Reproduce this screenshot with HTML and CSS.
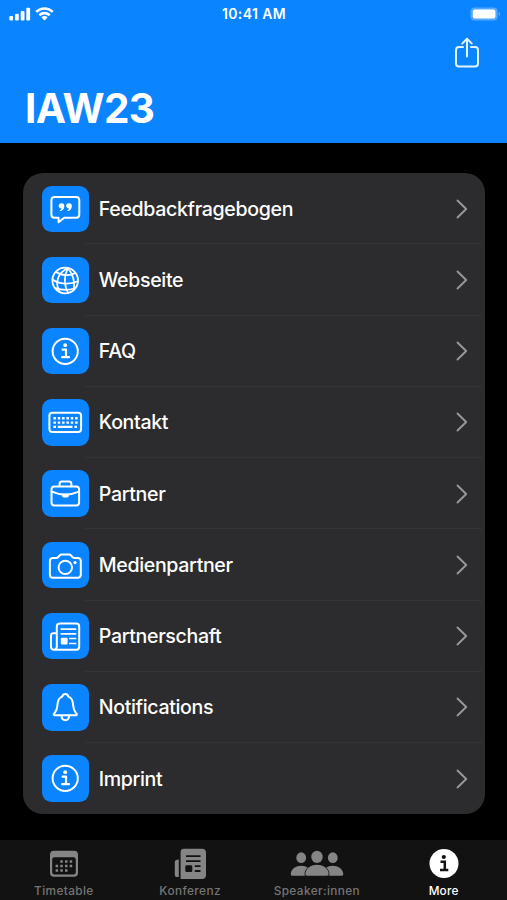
FILE: index.html
```html
<!DOCTYPE html>
<html lang="de">
<head>
  <meta charset="UTF-8" />
  <meta name="viewport" content="width=device-width, initial-scale=1.0" />
  <title>IAW23</title>
  <link rel="stylesheet" href="styles.css">
</head>
<body>
  <svg class="hidden">
    <symbol id="chevron" viewBox="0 0 12 20"><path d="M1.5 1.5 L10.2 10 L1.5 18.5" /></symbol>
    <symbol id="info" viewBox="0 0 46.5 46.5">
      <circle cx="23.2" cy="23.3" r="12.6" />
      <circle class="fill" cx="23.2" cy="17.2" r="1.9" />
      <path class="stem" d="M20.6 21.7 H24 V29 M20.1 29.2 H27" />
    </symbol>
  </svg>

  <header>
    <div class="status-bar">
      <div class="signal">
        <svg width="22" height="14" viewBox="0 0 22 14">
          <rect x="0.3" y="8.9" width="3.8" height="4.7" rx="1" />
          <rect x="6" y="6.8" width="3.8" height="6.8" rx="1" />
          <rect x="11.7" y="4" width="3.8" height="9.6" rx="1" />
          <rect x="17.3" y="0.7" width="3.8" height="12.9" rx="1" />
        </svg>
        <svg class="wifi" width="19" height="14" viewBox="0 0 19 14">
          <path d="M1.2 4.9 C6 .3 13 .3 17.8 4.9 M4.3 8.2 C7.3 5.4 11.7 5.4 14.7 8.2" />
          <path class="dot" d="M6.3 10.3 Q9.5 7.9 12.7 10.3 L9.5 13.5 Z" />
        </svg>
      </div>
      <span class="time">10:41 AM</span>
      <svg class="battery" width="31" height="14" viewBox="0 0 31 14">
        <rect class="case" x="0.5" y="0.5" width="27.1" height="13" rx="4" />
        <rect x="2.8" y="2.5" width="22.6" height="9" rx="2.2" />
        <path class="cap" d="M28.8 4.8 Q31.2 7 28.8 9.2 Z" />
      </svg>
    </div>
    <div class="toolbar">
      <svg class="share" width="26" height="32" viewBox="0 0 26 32">
        <path d="M9 10 H5 Q2 10 2 13 V26.6 Q2 29.6 5 29.6 H21 Q24 29.6 24 26.6 V13 Q24 10 21 10 H17" />
        <path d="M13 19.4 V2 M8.2 6.6 L13 1.8 L17.8 6.6" />
      </svg>
    </div>
    <h1>IAW23</h1>
  </header>

  <main>
    <ul class="menu">
      <li>
        <svg class="tile" viewBox="0 0 46.5 46.5">
          <path d="M12.7 11 H34 Q37.3 11 37.3 14.3 V28.5 Q37.3 31.8 34 31.8 H22.2 L16.6 36.3 V31.8 H12.7 Q9.4 31.8 9.4 28.5 V14.3 Q9.4 11 12.7 11 Z" />
          <path class="fill" d="M19.4 17.2 a2.8 2.8 0 0 1 2.9 3 c0 2.5-1.6 4.4-4 5 l-.5-1 c1.2-.4 1.9-1.1 2.1-1.9 a2.6 2.6 0 1 1-.5-5.1 Z M26.9 17.2 a2.8 2.8 0 0 1 2.9 3 c0 2.5-1.6 4.4-4 5 l-.5-1 c1.2-.4 1.9-1.1 2.1-1.9 a2.6 2.6 0 1 1-.5-5.1 Z" />
        </svg>
        <span>Feedbackfragebogen</span>
        <svg class="chevron"><use href="#chevron" /></svg>
      </li>
      <li>
        <svg class="tile globe" viewBox="0 0 46.5 46.5">
          <circle cx="23.2" cy="23.5" r="12.8" />
          <path d="M25.8 11 C22 19 22 28 26 35.9 M25.8 11 C15.5 16 12.7 26 17.5 34.6 M25.8 11 C31 17 33 25 31.8 32.8" />
          <path d="M14 14.7 C19 18.8 28 19.3 33.2 16 M10.5 22.5 C17 27.3 28 28 35.8 24.3 M13.2 31 C19 33 27 33.2 32.2 31.5" />
        </svg>
        <span>Webseite</span>
        <svg class="chevron"><use href="#chevron" /></svg>
      </li>
      <li>
        <svg class="tile"><use href="#info" /></svg>
        <span>FAQ</span>
        <svg class="chevron"><use href="#chevron" /></svg>
      </li>
      <li>
        <svg class="tile" viewBox="0 0 46.5 46.5">
          <rect x="7.4" y="13.7" width="31.7" height="19.4" rx="3" />
          <path class="keys" d="M11.4 19.3 H35.6 M11.4 23.6 H35.6" />
          <path class="space" d="M11.4 27.9 H14 M15.8 27.9 H30.4 M32.4 27.9 H35" />
        </svg>
        <span>Kontakt</span>
        <svg class="chevron"><use href="#chevron" /></svg>
      </li>
      <li>
        <svg class="tile" viewBox="0 0 46.5 46.5">
          <rect x="9.5" y="16.4" width="27.6" height="19.2" rx="3" />
          <path d="M17.6 16.3 V14 Q17.6 11.6 20 11.6 H27 Q29.4 11.6 29.4 14 V16.3 M9.7 21.7 Q23.3 27.6 36.9 21.7" />
          <rect class="fill" x="20" y="23.4" width="6.8" height="4" rx="1.6" />
        </svg>
        <span>Partner</span>
        <svg class="chevron"><use href="#chevron" /></svg>
      </li>
      <li>
        <svg class="tile" viewBox="0 0 46.5 46.5">
          <path d="M11 15.9 H14.4 Q15.8 15.9 16.7 14.7 L17.7 13.4 Q18.5 12.5 19.7 12.5 H27 Q28.2 12.5 29 13.4 L30 14.7 Q30.9 15.9 32.3 15.9 H35.7 Q38.8 15.9 38.8 19 V32.7 Q38.8 35.8 35.7 35.8 H11 Q7.9 35.8 7.9 32.7 V19 Q7.9 15.9 11 15.9 Z" />
          <circle cx="23.3" cy="25.4" r="6.7" />
          <circle class="fill" cx="33" cy="20.6" r="1.6" />
        </svg>
        <span>Medienpartner</span>
        <svg class="chevron"><use href="#chevron" /></svg>
      </li>
      <li>
        <svg class="tile" viewBox="0 0 46.5 46.5">
          <path d="M14.8 33.6 V13.4 Q14.8 10.4 17.8 10.4 H34.2 Q37.2 10.4 37.2 13.4 V33.8 Q37.2 36.8 34.2 36.8 H12 Q9 36.8 9 33.8 V22.7 Q9 20.3 11.4 20.3 H14.8 V33.6 Q14.8 36.8 12 36.8" />
          <path class="thin" d="M19.2 16.1 H33.6 M19.2 20.8 H33.6 M27.8 25.5 H33.6 M27.8 30.5 H33.6" />
          <rect class="fill" x="18.8" y="24.8" width="6.8" height="6.6" rx="1" />
        </svg>
        <span>Partnerschaft</span>
        <svg class="chevron"><use href="#chevron" /></svg>
      </li>
      <li>
        <svg class="tile" viewBox="0 0 46.5 46.5">
          <path d="M12.3 31.2 Q11.3 31.2 12 29.8 C13.7 27.6 15.1 26.7 15.4 21.5 C15.6 16.2 17.1 13.6 20.2 12.6 C21.2 9.2 25.4 9.2 26.4 12.6 C29.5 13.6 31 16.2 31.2 21.5 C31.5 26.7 32.9 27.6 34.6 29.8 Q35.3 31.2 34.3 31.2 Z M19.5 31.8 C19.7 37.7 26.9 37.7 27.1 31.8" />
        </svg>
        <span>Notifications</span>
        <svg class="chevron"><use href="#chevron" /></svg>
      </li>
      <li>
        <svg class="tile"><use href="#info" /></svg>
        <span>Imprint</span>
        <svg class="chevron"><use href="#chevron" /></svg>
      </li>
    </ul>
  </main>

  <nav>
    <a>
      <svg width="30" height="32" viewBox="0 0 30 32">
        <path fill-rule="evenodd" d="M5 2.7 H25 Q29 2.7 29 6.7 V24.7 Q29 28.7 25 28.7 H5 Q1 28.7 1 24.7 V6.7 Q1 2.7 5 2.7 Z M5.5 9.3 Q3.2 9.3 3.2 11.5 V24.3 Q3.2 26.5 5.5 26.5 H24.5 Q26.8 26.5 26.8 24.3 V11.5 Q26.8 9.3 24.5 9.3 Z" />
        <path class="days" d="M11.3 13.4 H24 M6.6 17.9 H24 M6.6 22.4 H19.4" />
      </svg>
      Timetable
    </a>
    <a>
      <svg width="32" height="32" viewBox="0 0 32 32">
        <path d="M10 0.7 H28 Q32 0.7 32 4.7 V27 Q32 31 28 31 H6.6 V4.1 Q6.6 0.7 10 0.7 Z M4.8 11.5 V29 H3.4 Q0.8 29 0.8 26.4 V14 Q0.8 11.5 4.8 11.5 Z" />
        <path class="print" d="M12 8.2 H26.5 M12 13.2 H26.5 M20.8 18.1 H26.5 M20.8 23 H26.5" />
        <rect class="photo" x="11.3" y="17.2" width="7" height="6.7" rx="1.2" />
      </svg>
      Konferenz
    </a>
    <a>
      <svg width="54" height="32" viewBox="0 0 54 32">
        <ellipse cx="11.2" cy="9.7" rx="4.9" ry="5.4" />
        <ellipse cx="42.8" cy="9.7" rx="4.9" ry="5.4" />
        <path d="M2.2 27.7 Q.6 27.7 .7 25.9 C1.7 14.9 20.7 14.9 21.7 25.9 V27.7 Z M51.8 27.7 Q53.4 27.7 53.3 25.9 C52.3 14.9 33.3 14.9 32.3 25.9 V27.7 Z" />
        <path class="front" d="M17 27.7 Q15.3 27.7 15.3 25.7 C16.5 13.9 37.5 13.9 38.7 25.7 Q38.7 27.7 37 27.7 Z" />
        <ellipse cx="27" cy="8.9" rx="5.7" ry="6.2" />
      </svg>
      Speaker:innen
    </a>
    <a class="active">
      <svg width="32" height="32" viewBox="0 0 32 32">
        <circle cx="16" cy="15.6" r="14.5" />
        <circle class="dark" cx="15.8" cy="9" r="2.1" />
        <path class="mark" d="M12.5 13.8 H16.8 V21.8 M12 22.1 H20.3" />
      </svg>
      More
    </a>
  </nav>
</body>
</html>
```
FILE: styles.css
```css
* {
  box-sizing: border-box;
  margin: 0;
  padding: 0;
}

body {
  display: flex;
  flex-direction: column;
  height: 100vh;
  overflow: hidden;
  background: #000;
  color: #fff;
  font-family: Inter, "Liberation Sans", sans-serif;
}

.hidden {
  display: none;
}

/* Header */
header {
  height: 142.5px;
  background: #0a84ff;
}

.status-bar {
  display: grid;
  grid-template-columns: 1fr auto 1fr;
  align-items: center;
  height: 27px;
  padding: 0 6px 0 9px;
}

.status-bar svg {
  display: block;
  fill: #fff;
}

.signal {
  display: flex;
  gap: 4px;
}

.status-bar .wifi {
  fill: none;
  stroke: #fff;
  stroke-width: 2.6;
}

.status-bar .dot {
  fill: #fff;
  stroke: none;
}

.time {
  margin-right: 2px;
  font-size: 14px;
  font-weight: 600;
  letter-spacing: 0.4px;
}

.battery {
  justify-self: end;
}

.status-bar .case {
  fill: #55a9ff;
}

.status-bar .cap {
  fill: #6cb5ff;
}

.toolbar {
  display: flex;
  justify-content: flex-end;
  height: 56px;
  padding: 9.5px 27px 0 0;
}

.share {
  fill: none;
  stroke: #e2f4ff;
  stroke-width: 2;
  stroke-linecap: round;
  stroke-linejoin: round;
}

h1 {
  padding-left: 25px;
  font-size: 40.5px;
  font-weight: 700;
  line-height: 52px;
  letter-spacing: -0.6px;
}

/* List */
main {
  flex: 1;
  padding: 30.7px 22.5px 0 23px;
}

.menu {
  border-radius: 20px;
  background: #2c2c2e;
  list-style: none;
}

.menu li {
  display: flex;
  align-items: center;
  height: 71.22px;
  padding: 0 17px 0 19.3px;
  background: linear-gradient(#343436, #343436) 61px 100% / 398px 1px no-repeat;
}

.menu li:last-child {
  background: none;
}

.menu span {
  flex: 1;
  padding-left: 10px;
  font-size: 19.6px;
  font-weight: 500;
  letter-spacing: -0.36px;
}

.tile {
  width: 46.5px;
  height: 46.5px;
  border-radius: 9.5px;
  background: #0a84ff;
  fill: none;
  stroke: #fff;
  stroke-width: 2;
  stroke-linecap: round;
  stroke-linejoin: round;
}

.fill {
  fill: #fff;
  stroke: none;
}

.stem {
  stroke-width: 2.2;
}

.globe {
  stroke-width: 1.8;
}

.keys {
  stroke-width: 2.4;
  stroke-linecap: butt;
  stroke-dasharray: 2.5 1.84;
}

.space {
  stroke-width: 2.3;
  stroke-linecap: butt;
}

.thin {
  stroke-width: 1.7;
}

.chevron {
  width: 12px;
  height: 20px;
  fill: none;
  stroke: #98989c;
  stroke-width: 1.9;
  stroke-linecap: round;
  stroke-linejoin: round;
}

/* Tab bar */
nav {
  display: grid;
  grid-template-columns: repeat(4, 1fr);
  height: 60.5px;
  background: #121212;
}

nav a {
  display: flex;
  flex-direction: column;
  align-items: center;
  padding-top: 8px;
  color: #757575;
  font-size: 11.8px;
  font-weight: 500;
  line-height: 22px;
  letter-spacing: 0.4px;
}

nav a:first-child {
  padding-left: 1px;
}

nav svg {
  fill: #858585;
}

nav .active,
nav .active svg {
  color: #fff;
  fill: #fff;
}

nav .active {
  letter-spacing: 0.2px;
}

nav .days {
  fill: none;
  stroke: #858585;
  stroke-width: 2.5;
  stroke-dasharray: 2.5 2.2;
}

.print,
.mark {
  fill: none;
  stroke: #121212;
  stroke-width: 1.8;
}

.mark {
  stroke-width: 2.5;
}

.photo,
.dark {
  fill: #121212;
}

.front {
  stroke: #121212;
  stroke-width: 1.6;
  paint-order: stroke;
}
```
